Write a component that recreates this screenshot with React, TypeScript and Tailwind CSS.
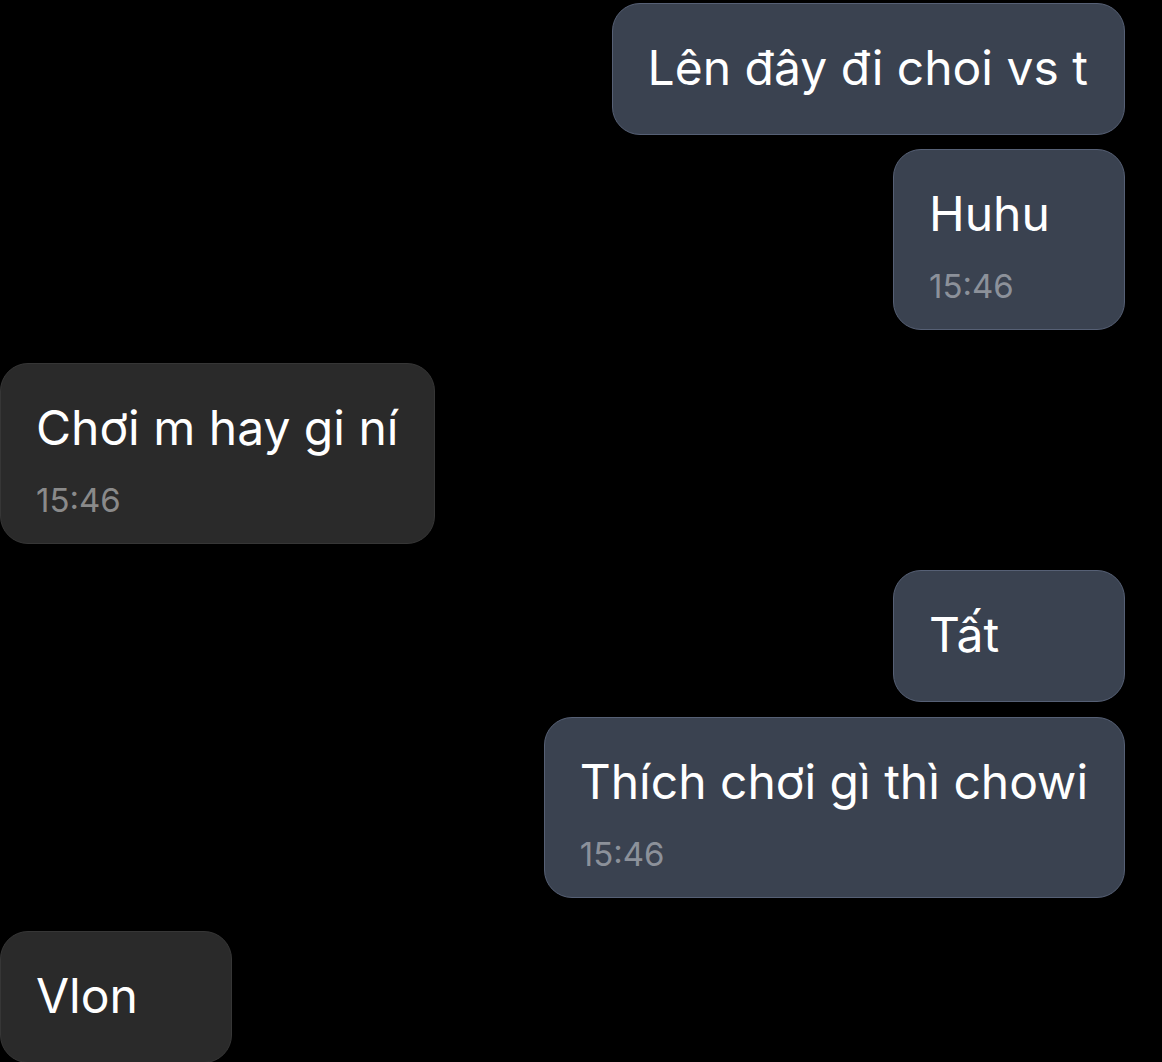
import React from "react";

type Msg = { text: string; time?: string; mine: boolean; mt: string };

const msgs: Msg[] = [
  { text: "Lên đây đi choi vs t", mine: true, mt: "mt-[3px]" },
  { text: "Huhu", time: "15:46", mine: true, mt: "mt-[14px]" },
  { text: "Chơi m hay gi ní", time: "15:46", mine: false, mt: "mt-[33px]" },
  { text: "Tất", mine: true, mt: "mt-[26px]" },
  { text: "Thích chơi gì thì chowi", time: "15:46", mine: true, mt: "mt-[15px]" },
  { text: "Vlon", mine: false, mt: "mt-[33px]" },
];

function Bubble({ m }: { m: Msg }) {
  const base = m.mine
    ? "bg-[#3a4250] border-[#566075]"
    : "bg-[#2a2a2a] border-[#363636]";
  const pad = m.time ? "pt-[35px] pb-[23px]" : "pt-[35px] pb-[37px]";
  return (
    <div
      className={`${m.mt} flex ${m.mine ? "justify-end pr-[37px]" : "justify-start"}`}
    >
      <div
        className={`${base} ${pad} border-[1.5px] rounded-[28px] pl-[35px] pr-[36px] min-w-[232px] flex flex-col`}
      >
        <div className="text-white text-[48px] leading-[58px] whitespace-nowrap">
          {m.text}
        </div>
        {m.time && (
          <div
            className={`mt-[23px] text-[33px] leading-[40px] ${
              m.mine ? "text-[#8c919a]" : "text-[#8a8a8a]"
            }`}
          >
            {m.time}
          </div>
        )}
      </div>
    </div>
  );
}

export default function App() {
  return (
    <div
      className="w-[1162px] h-[1062px] bg-black overflow-hidden flex flex-col"
      style={{ fontFamily: "Inter, 'Noto Sans', sans-serif" }}
    >
      {msgs.map((m, i) => (
        <Bubble key={i} m={m} />
      ))}
    </div>
  );
}
